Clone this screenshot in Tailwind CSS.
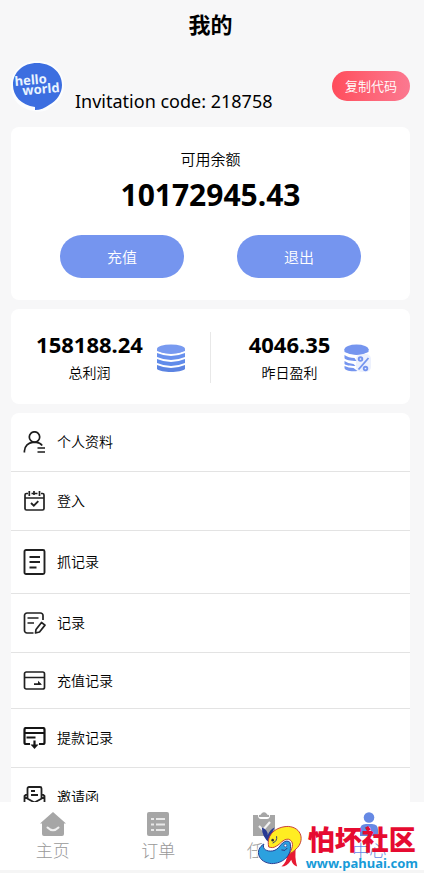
<!DOCTYPE html>
<html lang="zh-CN">
<head>
<meta charset="utf-8">
<meta name="viewport" content="width=device-width, initial-scale=1">
<title>我的</title>
<script src="https://cdn.jsdelivr.net/npm/@tailwindcss/browser@4"></script>
</head>
<body class="relative flex h-screen flex-col overflow-hidden bg-[#f7f7f8] font-['Noto_Sans','Noto_Sans_CJK_SC',sans-serif] text-black">
<main class="min-h-0 flex-1 overflow-y-auto pr-[14px] pl-[11px] [scrollbar-width:none]">
  <h1 class="pt-2 text-center text-[22px] leading-8 font-bold">我的</h1>

  <header class="mt-5 flex h-[54px] items-start">
    <svg class="h-[52px] w-[54px] shrink-0" viewBox="0 0 54 52" role="img" aria-label="hello world">
      <path d="M26 1C11 1 0 11 0 26c0 13 9 23 23 25 5 1 13 1 16-4 8-4 14-12 14-21C53 11 41 1 26 1z" fill="#fcfdfe"/>
      <path d="M26 3C12 3 2 12 2 25c0 11 8 20 22 22v3c5 0 10-2 14-5 8-4 13-12 13-20C51 12 40 3 26 3z" fill="#3c6ee0"/>
      <g transform="rotate(-5 26 25)" fill="#e9f4ff" font-family="Open Sans, sans-serif" font-weight="700" font-size="13">
        <text x="4" y="24">hello</text><text x="11" y="34">world</text>
      </g>
    </svg>
    <p class="ml-[10px] self-end text-[18px] leading-[26px]">Invitation code: 218758</p>
    <button type="button" class="mt-[11px] ml-auto h-[30px] w-[78px] shrink-0 rounded-full bg-linear-to-r from-[#ff4c5c] to-[#fb7890] pt-px text-[13px] font-[350] text-white">复制代码</button>
  </header>

  <section class="mt-[13px] rounded-lg bg-white pt-5 pb-[22px] text-center">
    <h2 class="text-[15px] leading-6 font-[350]">可用余额</h2>
    <p class="mt-1 text-[30px] leading-10 font-bold">10172945.43</p>
    <div class="mt-5 flex justify-center gap-[53px]">
      <button type="button" class="h-[43px] w-[124px] rounded-full bg-[#7595ef] pt-0.5 text-[15px] font-[350] text-white">充值</button>
      <button type="button" class="h-[43px] w-[124px] rounded-full bg-[#7595ef] pt-0.5 text-[15px] font-[350] text-white">退出</button>
    </div>
  </section>

  <section class="mt-[9px] flex items-center rounded-lg bg-white pt-[21px] pb-[19px]">
    <div class="flex flex-1 items-center justify-center gap-[14px]">
      <div class="text-center">
        <p class="text-[22px] leading-7 font-bold">158188.24</p>
        <p class="mt-[3px] text-[14px] leading-6 font-[350]">总利润</p>
      </div>
      <svg class="h-7 w-7" viewBox="0 0 28 28" aria-hidden="true">
        <g fill="#5c84e2"><path d="M0 21q14 6 28 0v4c-4 4-24 4-28 0z"/><path d="M0 15q14 6 28 0v4q-14 6-28 0z" fill="#608bea"/><path d="M0 9q14 6 28 0v4q-14 6-28 0z" fill="#6890ed"/></g>
        <ellipse cx="14" cy="5" rx="14" ry="4.5" fill="#789af0"/><path d="M0 5v2q14 6 28 0V5q-14 6-28 0z" fill="#789af0"/>
      </svg>
    </div>
    <div class="h-[51px] w-px bg-[#e8e8e8]"></div>
    <div class="flex flex-1 items-center justify-center gap-[14px]">
      <div class="text-center">
        <p class="text-[22px] leading-7 font-bold">4046.35</p>
        <p class="mt-[3px] text-[14px] leading-6 font-[350]">昨日盈利</p>
      </div>
      <svg class="h-7 w-7" viewBox="0 0 28 28" aria-hidden="true">
        <rect x="12" y="10" width="15" height="18" rx="5" fill="#edf1fd"/>
        <g fill="#7595ef"><ellipse cx="12.500" cy="5.500" rx="12" ry="5"/><path d="M.5 5v3q12 6 24 0V5z"/><path d="M.5 11q4 3 10 3l2 3c-5 0-12-1-12-3zM.5 17q4 3 9 3l2 2c-5 0-11-1-11-2zM.5 22q4 2 9 2l4 3C6 28 .5 26 .5 24z"/></g>
        <g fill="none" stroke="#7595ef" stroke-width="1.900"><circle cx="16.500" cy="15" r="1.800"/><circle cx="21.500" cy="24.500" r="1.800"/><path d="M14.500 25.500L24.500 14"/></g>
      </svg>
    </div>
  </section>

  <nav class="mt-[9px] rounded-t-lg bg-white text-[14px] leading-[18px] font-[350]" aria-label="我的">
    <a href="#profile" class="flex items-center gap-[11px] border-b border-[#e3e3e3] py-[18px] pl-3">
      <svg class="h-[22px] w-[23px]" viewBox="0 0 22 22" fill="none" stroke="#1d1d1d" stroke-width="1.700" aria-hidden="true"><circle cx="11" cy="6" r="5.200"/><path d="M.9 21.500v-1.500c.3-5 4-8.400 8.400-8.600h3.400c2.500.1 4.600 1.200 6 3"/><path d="M14 17h7.500M14 21h7.500"/></svg>
      个人资料</a>
    <a href="#signin" class="flex items-center gap-[11px] border-b border-[#e3e3e3] py-[18px] pl-3">
      <svg class="h-[22px] w-[23px]" viewBox="0 0 22 22" fill="none" stroke="#222" stroke-width="1.700" aria-hidden="true"><path d="M4.500 3.500H3a1.500 1.500 0 0 0-1.500 1.500v13.500A1.500 1.500 0 0 0 3 20h16a1.500 1.500 0 0 0 1.500-1.500V5A1.500 1.500 0 0 0 19 3.500h-1.500M8 3.500h6M1.500 8h19M5.800 1v5M10.500 1v4M16 1v5"/><path d="M7.500 13l2.800 2.600 4.500-4.500" stroke-width="1.900"/></svg>
      登入</a>
    <a href="#grabs" class="flex items-center gap-[11px] border-b border-[#e3e3e3] py-[18px] pl-3">
      <svg class="h-[26px] w-[23px]" viewBox="0 0 22 26" fill="none" stroke="#202020" stroke-width="1.900" aria-hidden="true"><rect x="1" y="1" width="20" height="24" rx="1.500"/><path d="M6 8h10.500M6 13h10.500M6 18.500h7"/></svg>
      抓记录</a>
    <a href="#records" class="flex items-center gap-[11px] border-b border-[#e3e3e3] py-[18px] pl-3">
      <svg class="h-[22px] w-[23px]" viewBox="0 0 22 22" fill="none" stroke="#222" stroke-width="1.700" stroke-linejoin="round" aria-hidden="true"><path d="M19.500 8V3.500A2.500 2.500 0 0 0 17 1H3.500A2.500 2.500 0 0 0 1 3.500v15A2.500 2.500 0 0 0 3.500 21H10"/><path d="M4 6h11M4 11h6.500"/><path d="M12.500 17.500l5.500-7 3.500 2.600-5.500 6.900-4 1z"/></svg>
      记录</a>
    <a href="#deposits" class="flex items-center gap-[11px] border-b border-[#e3e3e3] py-[18px] pl-3">
      <svg class="h-[19px] w-[23px]" viewBox="0 0 22 19" fill="none" stroke="#202020" stroke-width="1.700" aria-hidden="true"><rect x="1" y="1" width="20" height="17" rx="1.800"/><path d="M1 6.500h20M10.500 13.200H17"/><path d="M14.500 9.800l4 4h-4z" fill="#202020" stroke="none"/></svg>
      充值记录</a>
    <a href="#withdrawals" class="flex items-center gap-[11px] border-b border-[#e3e3e3] py-[18px] pl-3">
      <svg class="h-[22px] w-[23px]" viewBox="0 0 22 22" fill="none" stroke="#151515" stroke-width="2.200" aria-hidden="true"><path d="M6.500 17H2.500A1.500 1.500 0 0 1 1 15.500v-13A1.500 1.500 0 0 1 2.500 1h17A1.500 1.500 0 0 1 21 2.500v13a1.500 1.500 0 0 1-1.500 1.500h-4M1 6h20M3 10.500h9"/><path d="M11 13.500v5"/><path d="M7 17.500h8l-4 4.500z" fill="#151515" stroke="none"/></svg>
      提款记录</a>
    <a href="#invite" class="flex items-center gap-[11px] py-[18px] pl-3">
      <svg class="h-[22px] w-[23px]" viewBox="0 0 22 22" fill="none" stroke="#202020" stroke-width="1.800" stroke-linejoin="round" aria-hidden="true"><path d="M4 12V2.500A1.500 1.500 0 0 1 5.500 1h11A1.500 1.500 0 0 1 18 2.500V12M4 7.500L1 10v11h20V10l-3-2.500M1 11l10 5.500L21 11M7.500 5h4M7.500 9h7"/></svg>
      邀请函</a>
  </nav>
</main>

<nav class="flex shrink-0 border-b-[3px] border-[#f5f5f5] bg-white pt-[10px] pr-0.5 pb-1.5 text-[17px] leading-[26px] font-light text-[#999]" aria-label="主导航">
  <a href="#home" class="flex flex-1 flex-col items-center gap-0.5">
    <svg class="h-6 w-[26px]" viewBox="0 0 26 24" aria-hidden="true"><path d="M13 0L0 11.500h2V22a2 2 0 0 0 2 2h18a2 2 0 0 0 2-2V11.500h2z" fill="#a6a6a6"/><path d="M7.500 15.500q5.500 5.500 11 0" fill="none" stroke="#f0f0f0" stroke-width="2" stroke-linecap="round"/></svg>
    主页</a>
  <a href="#orders" class="flex flex-1 flex-col items-center gap-0.5">
    <svg class="h-6 w-[26px]" viewBox="0 0 26 24" aria-hidden="true"><rect x="2" width="22" height="24" rx="2" fill="#a6a6a6"/><path d="M6 7h3M6 12.500h3M6 18h3M11 7h9M11 12.500h9M11 18h9" stroke="#e8e8e8" stroke-width="2"/></svg>
    订单</a>
  <a href="#tasks" class="flex flex-1 flex-col items-center gap-0.5">
    <svg class="h-6 w-[26px]" viewBox="0 0 26 24" aria-hidden="true"><path d="M2 3h5q0 4 3 4h6q3 0 3-4h5v21H2z" fill="#a6a6a6"/><path d="M8 5V3q2 0 2.500-1.500Q13-1 15.500 1.500 16 3 18 3v2z" fill="#a6a6a6"/><path d="M8 14l4 4 7-8" fill="none" stroke="#f2f2f2" stroke-width="2.200"/></svg>
    任务</a>
  <a href="#center" class="flex flex-1 flex-col items-center gap-0.5 text-[#6689e4]" aria-current="page">
    <svg class="h-6 w-[26px]" viewBox="0 0 26 24" aria-hidden="true"><circle cx="13" cy="5.500" r="5.300" fill="#6689e4"/><path d="M4 24v-6q0-6 6-6h6q6 0 6 6v6z" fill="#6689e4"/><path d="M12 15h2l1 5-2 2-2-2z" fill="#fff"/></svg>
    中心</a>
</nav>

<aside class="absolute right-[6px] bottom-px flex items-end gap-[3px]" aria-label="怕坏社区">
  <svg class="mb-[3px] h-[46px] w-[46px]" viewBox="0 0 47 46" aria-hidden="true">
    <path d="M13 19Q17 2 32 2q17 2 14 19-3 10-9 12l1 10-6-4Q22 45 9 42-3 36 1 25z" fill="#fff"/>
    <path d="M13 20Q5 14 5 4q6 2 6 8 2-6 7-8-4 7-3 14z" fill="#273993"/>
    <path d="M31 31q5-2 9-8-2 11 1 21-5-2-6-7-4 7-10 7 6-5 6-13z" fill="#e71932"/>
    <path d="M12 24C9 11 20 3 32 3c14 1 17 15 8 23-3 3-5 4-7 5 4-7 5-13-1-15-6 0-8 5-12 7-3 2-5 2-8 1z" fill="#ffed22" stroke="#c63d35" stroke-width="1"/>
    <path d="M34 21c2 12-8 20-19 20C1 40-3 27 7 21c-2 5 3 8 9 7 7-1 8-9 14-10 3 0 4 1 4 3z" fill="#2ca1df" stroke="#263b91" stroke-width="1"/>
    <path d="M20 13q1 5-4 7M25 27q4 2 6-2" fill="none" stroke="#29367d" stroke-width="1"/><circle cx="16" cy="17" r="1.300" fill="#333"/><circle cx="29" cy="22.500" r="1.400" fill="#fff" stroke="#273993" stroke-width=".7"/>
  </svg>
  <div class="text-center">
    <p class="text-[27px] leading-[28px] font-black text-[#e60b31]">怕坏社区</p>
    <p class="text-[13px] leading-[18px] font-bold text-[#179bd8]">www.pahuai.com</p>
  </div>
</aside>
</body>
</html>
